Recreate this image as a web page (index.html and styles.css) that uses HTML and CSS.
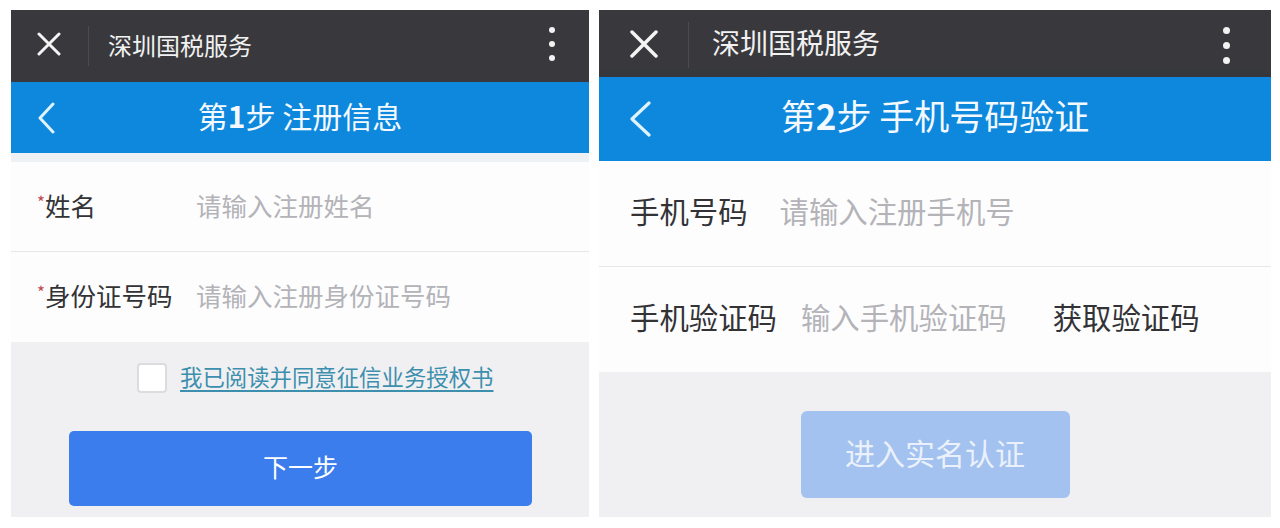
FILE: index.html
```html
<!DOCTYPE html>
<html lang="zh-CN">
<head>
<meta charset="utf-8">
<title>深圳国税服务</title>
<link rel="stylesheet" href="styles.css">
</head>
<body>
<div class="wrap">
  <section class="panel panel-left">
    <div class="topbar">
      <svg class="close" viewBox="0 0 24 24"><path d="M2 2 L22 22 M22 2 L2 22" stroke="#f4f4f4" stroke-width="3" fill="none" stroke-linecap="round"/></svg>
      <span class="sep"></span>
      <span class="app-title">深圳国税服务</span>
      <span class="more"><i></i><i></i><i></i></span>
    </div>
    <div class="navbar">
      <svg class="back" viewBox="0 0 18 32"><path d="M16 2 L3 16 L16 30" stroke="#dff3ff" stroke-width="3" fill="none" stroke-linecap="round" stroke-linejoin="round"/></svg>
      <h1 class="nav-title">第<b>1</b>步 注册信息</h1>
      <span></span>
    </div>
    <div class="strip"></div>
    <div class="form">
      <div class="row row-a"><span class="label"><span class="star">*</span>姓名</span><span class="ph">请输入注册姓名</span></div>
      <div class="divider"></div>
      <div class="row row-b"><span class="label"><span class="star">*</span>身份证号码</span><span class="ph">请输入注册身份证号码</span></div>
    </div>
    <div class="gray gray-left">
      <div class="agree"><span class="checkbox"></span><a class="link">我已阅读并同意征信业务授权书</a></div>
      <div class="btn btn-next">下一步</div>
    </div>
  </section>

  <section class="panel panel-right">
    <div class="topbar topbar-r">
      <svg class="close close-r" viewBox="0 0 28 28"><path d="M2 2 L26 26 M26 2 L2 26" stroke="#f4f4f4" stroke-width="3.5" fill="none" stroke-linecap="round"/></svg>
      <span class="sep sep-r"></span>
      <span class="app-title app-title-r">深圳国税服务</span>
      <span class="more more-r"><i></i><i></i><i></i></span>
    </div>
    <div class="navbar navbar-r">
      <svg class="back back-r" viewBox="0 0 24 36"><path d="M21 2 L4 18 L21 34" stroke="#dff3ff" stroke-width="3.2" fill="none" stroke-linecap="round" stroke-linejoin="round"/></svg>
      <h1 class="nav-title nav-title-r">第<b>2</b>步 手机号码验证</h1>
      <span></span>
    </div>
    <div class="form">
      <div class="row row-r"><span class="label-r">手机号码</span><span class="ph ph-r1">请输入注册手机号</span></div>
      <div class="divider"></div>
      <div class="row row-r"><span class="label-r">手机验证码</span><span class="ph ph-r2">输入手机验证码</span><span class="getcode">获取验证码</span></div>
    </div>
    <div class="gray gray-right">
      <div class="btn btn-verify">进入实名认证</div>
    </div>
  </section>
</div>
</body>
</html>
```

FILE: styles.css
```css
* { box-sizing: border-box; }
html, body { margin: 0; padding: 0; background: #ffffff; }
body {
  font-family: "Noto Sans CJK SC", "Noto Sans", sans-serif;
  color: #333;
  width: 1280px;
  height: 528px;
  overflow: hidden;
}
.wrap {
  display: flex;
  gap: 10px;
  padding: 10px 0 0 11px;
}
.panel { display: flex; flex-direction: column; }
.panel-left { width: 578px; }
.panel-right { width: 672px; }

/* dark top bar */
.topbar {
  height: 72px;
  background: #39393d;
  display: flex;
  align-items: center;
}
.close { width: 24px; height: 24px; margin-left: 26px; margin-top: -4px; display: block; }
.sep { width: 1px; height: 40px; background: #4b4b50; margin-left: 27px; }
.app-title {
  margin-left: 19px;
  font-size: 24px;
  color: #f1f1f1;
  line-height: 1;
  margin-top: -3px;
}
.more {
  margin-left: auto;
  margin-right: 34px;
  display: flex;
  flex-direction: column;
  gap: 8px;
  margin-top: -4px;
}
.more i { display: block; width: 6px; height: 6px; border-radius: 50%; background: #f2f2f2; }

.topbar-r {
  height: 67px;
  align-items: flex-start;
  padding-top: 10px;
  background: linear-gradient(#39393d 0, #39393d 58px, #34373c 67px);
}
.close-r { width: 28px; height: 28px; margin-left: 31px; margin-top: 10px; }
.sep-r { margin-left: 30px; height: 46px; margin-top: 2px; }
.app-title-r { margin-left: 23px; font-size: 28px; margin-top: 8px; }
.more-r { margin-right: 41px; gap: 8px; margin-top: 7px; }
.more-r i { width: 7px; height: 7px; }

/* blue nav bar */
.navbar {
  height: 71px;
  background: #0d88dc;
  display: grid;
  grid-template-columns: 1fr auto 1fr;
  align-items: center;
}
.back { width: 18px; height: 32px; margin-left: 26px; display: block; }
.nav-title {
  margin: -5px 0 0;
  font-size: 30px;
  font-weight: 400;
  color: #f3f9fe;
  line-height: 1;
  white-space: nowrap;
}
.nav-title b { font-weight: 700; }
.navbar-r { height: 84px; }
.back-r { width: 24px; height: 36px; margin-left: 29px; }
.nav-title-r { font-size: 35px; margin-top: -9px; }

.strip { height: 9px; background: #eef1f3; }

/* form */
.form { background: #fdfdfe; }
.row { display: flex; align-items: center; padding-bottom: 4px; }
.row-a { height: 89px; }
.row-b { height: 90px; }
.divider { height: 1px; background: #e7e7ea; }
.label {
  width: 185px;
  padding-left: 26px;
  font-size: 25.5px;
  color: #333336;
  white-space: nowrap;
  line-height: 1;
}
.star {
  font-size: 17px;
  color: #c24a4f;
  vertical-align: 7px;
}
.ph { font-size: 25.5px; color: #b3b3b8; line-height: 1; white-space: nowrap; }

.row-r { height: 105px; padding-bottom: 6px; }
.label-r { padding-left: 31px; font-size: 29.4px; color: #333336; line-height: 1; white-space: nowrap; }
.ph-r1 { font-size: 29.4px; margin-left: 32px; }
.ph-r2 { font-size: 29.4px; margin-left: 24px; }
.getcode { font-size: 29.4px; color: #333336; margin-left: 46px; line-height: 1; }

/* gray area */
.gray { background: #f0f0f2; display: flex; flex-direction: column; }
.gray-left { height: 175px; }
.gray-right { height: 145px; align-items: center; }

.agree {
  display: flex;
  align-items: center;
  gap: 13px;
  margin: 21px 0 0 126px;
  height: 30px;
}
.checkbox {
  width: 30px;
  height: 30px;
  border: 2px solid #dcdcdf;
  border-radius: 4px;
  background: #ffffff;
}
.link {
  font-size: 22.4px;
  color: #3d8fae;
  text-decoration: underline;
  text-underline-offset: 4px;
  line-height: 1;
  margin-top: -4px;
}
.btn {
  display: flex;
  align-items: center;
  justify-content: center;
  border-radius: 5px;
  line-height: 1;
  padding-bottom: 5px;
}
.btn-next {
  margin: 38px 0 0 58px;
  width: 463px;
  height: 75px;
  background: #3b7ded;
  color: #ffffff;
  font-size: 25px;
}
.btn-verify {
  margin-top: 39px;
  width: 269px;
  height: 87px;
  background: #a4c2ef;
  color: #eaf1fb;
  font-size: 30px;
  border-radius: 6px;
}
```
